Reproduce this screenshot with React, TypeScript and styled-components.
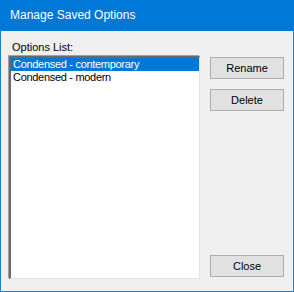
import React, { useState } from 'react';
import styled, { createGlobalStyle } from 'styled-components';

const GlobalStyle = createGlobalStyle`
  html, body {
    margin: 0;
    padding: 0;
    background: #ffffff;
  }
`;

const DialogWindow = styled.div`
  width: 294px;
  height: 292px;
  box-sizing: border-box;
  border: 1px solid #1883d7;
  border-top: none;
  background: #f0f0f0;
  display: flex;
  flex-direction: column;
  font-family: "Liberation Sans", Arial, sans-serif;
  font-size: 11px;
  color: #000;
`;

const TitleBar = styled.div`
  height: 30px;
  flex: none;
  margin: 0 -1px;
  background: #0078d7;
  color: #fff;
  display: flex;
  align-items: center;
  padding: 0 0 1px 10px;
  font-family: "Liberation Sans", Arial, sans-serif;
  font-size: 12px;
`;

const Body = styled.div`
  flex: 1;
  display: flex;
  gap: 10px;
  padding: 9px 9px 12px 8px;
  min-height: 0;
`;

const ListColumn = styled.div`
  flex: 1;
  display: flex;
  flex-direction: column;
`;

const Label = styled.div`
  line-height: 13px;
  padding: 1px 0 0 3px;
  margin-bottom: 2px;
`;

const ListBox = styled.ul`
  flex: 1;
  margin: 0;
  padding: 0;
  list-style: none;
  background: #fff;
  border-top: 2px solid #696969;
  border-left: 2px solid #696969;
  border-right: 1px solid #e3e3e3;
  border-bottom: 1px solid #e3e3e3;
  box-shadow: -1px -1px 0 #a0a0a0;
`;

const ListItem = styled.li<{ $selected?: boolean }>`
  height: 13px;
  line-height: 13px;
  padding-left: 2px;
  letter-spacing: -0.3px;
  white-space: nowrap;
  background: ${p => (p.$selected ? '#0078d7' : 'transparent')};
  color: ${p => (p.$selected ? '#fff' : '#000')};
  cursor: default;
`;

const ButtonColumn = styled.div`
  width: 74px;
  display: flex;
  flex-direction: column;
  gap: 10px;
  padding-top: 17px;
`;

const Button = styled.button<{ $bottom?: boolean }>`
  height: 22px;
  width: 74px;
  box-sizing: border-box;
  background: #e1e1e1;
  border: 1px solid #adadad;
  font-family: "Liberation Sans", Arial, sans-serif;
  font-size: 11px;
  color: #000;
  padding: 0;
  margin-top: ${p => (p.$bottom ? 'auto' : '0')};
  margin-bottom: ${p => (p.$bottom ? '2px' : '0')};
`;

const options = ['Condensed - contemporary', 'Condensed - modern'];

const App: React.FC = () => {
  const [selected, setSelected] = useState(0);

  return (
    <>
      <GlobalStyle />
      <DialogWindow>
        <TitleBar>Manage Saved Options</TitleBar>
        <Body>
          <ListColumn>
            <Label>Options List:</Label>
            <ListBox>
              {options.map((opt, i) => (
                <ListItem key={opt} $selected={i === selected} onClick={() => setSelected(i)}>
                  {opt}
                </ListItem>
              ))}
            </ListBox>
          </ListColumn>
          <ButtonColumn>
            <Button>Rename</Button>
            <Button>Delete</Button>
            <Button $bottom>Close</Button>
          </ButtonColumn>
        </Body>
      </DialogWindow>
    </>
  );
};

export default App;
